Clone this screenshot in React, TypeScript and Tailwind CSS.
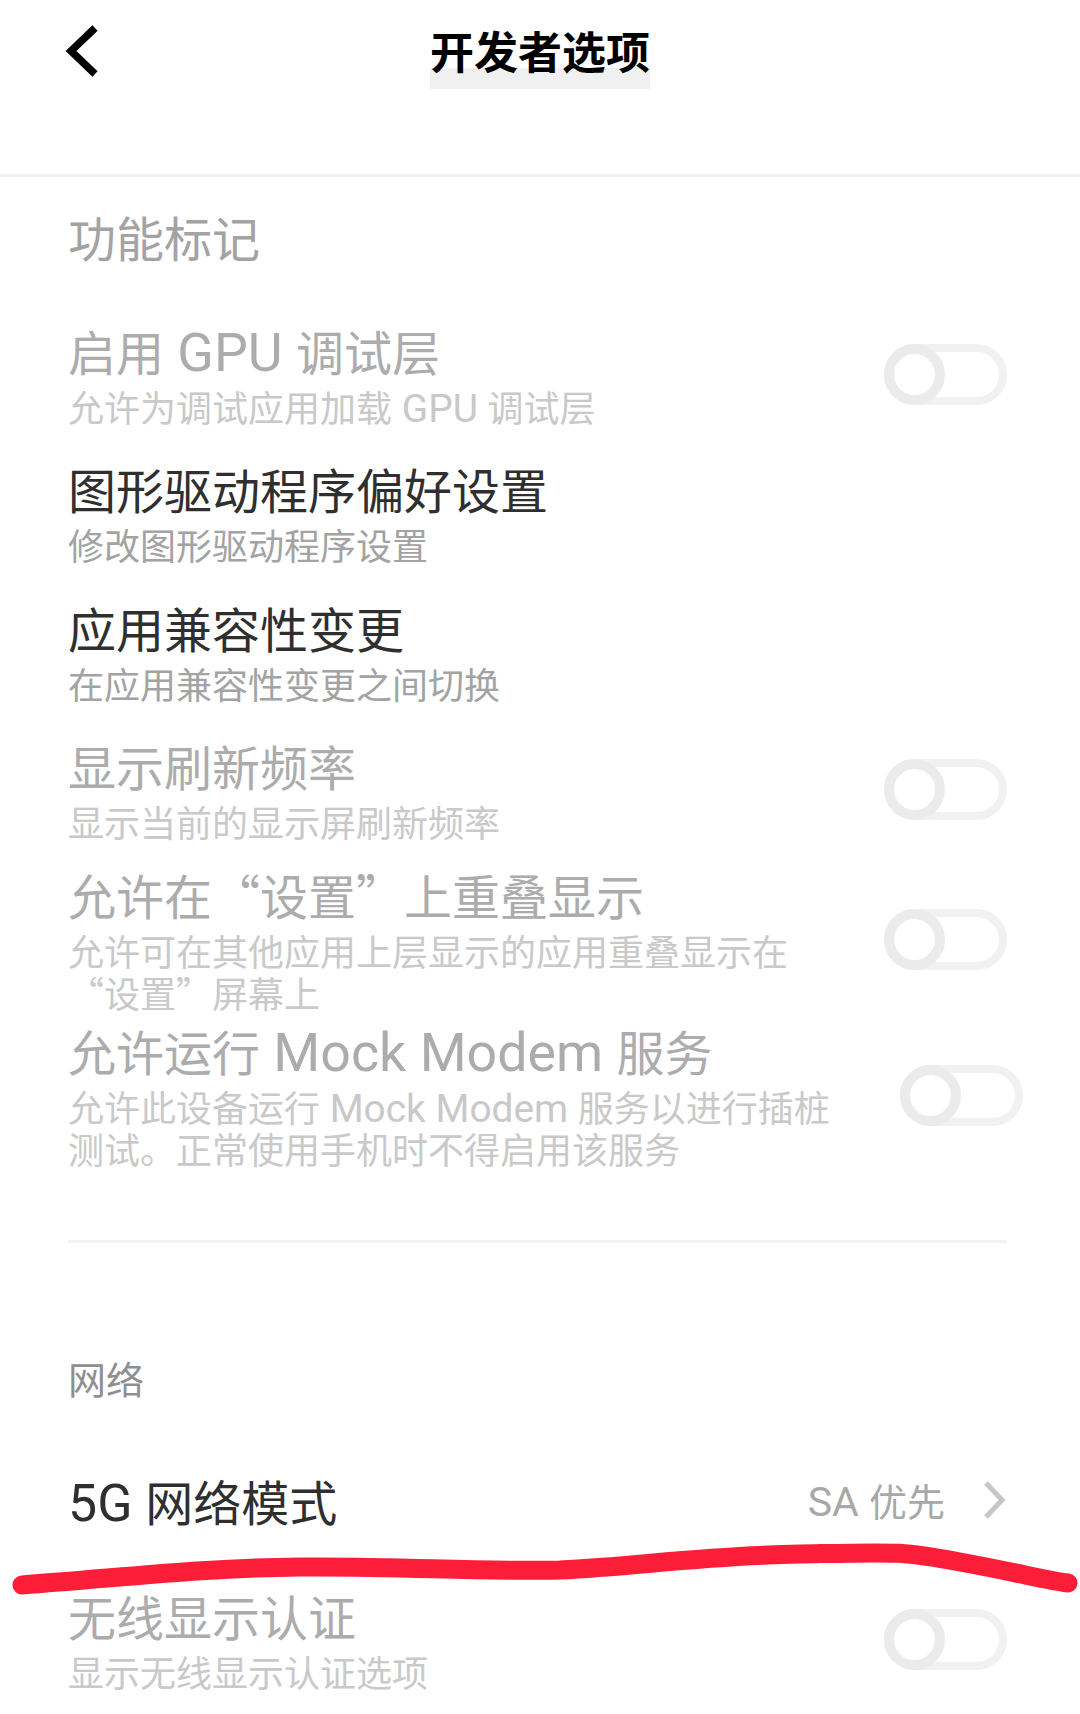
import React from 'react';

const Latin: React.FC<{ children: React.ReactNode; big?: boolean }> = ({ children, big }) => (
  <span className={`font-['Roboto',sans-serif] leading-[0] ${big ? 'text-[1.12em]' : 'text-[1.08em]'}`}>
    {children}
  </span>
);

const Toggle: React.FC<{ shift?: boolean }> = ({ shift }) => (
  <svg
    width="123"
    height="61"
    viewBox="0 0 123 61"
    className={`shrink-0 ${shift ? 'translate-x-[16px]' : ''}`}
  >
    <rect x="4" y="4" width="115" height="53" rx="26.5" fill="#ffffff" stroke="#f1f1f1" strokeWidth="8" />
    <circle cx="30.5" cy="30.5" r="25.5" fill="#ffffff" stroke="#ebebeb" strokeWidth="10" />
  </svg>
);

type RowProps = {
  title: React.ReactNode;
  subtitle: React.ReactNode;
  disabled?: boolean;
  toggle?: boolean;
  shift?: boolean;
  className?: string;
};

const Row: React.FC<RowProps> = ({ title, subtitle, disabled, toggle, shift, className }) => (
  <div className={`flex items-center justify-between ${className ?? ''}`}>
    <div className="w-[780px]">
      <div className={`h-[56px] text-[48px] leading-[56px] ${disabled ? 'text-[#acacac]' : 'text-[#2f2f2f]'}`}>
        {title}
      </div>
      <div className={`mt-[7px] text-[36px] leading-[42px] ${disabled ? 'text-[#c9c9c9]' : 'text-[#a3a3a3]'}`}>
        {subtitle}
      </div>
    </div>
    {toggle && <Toggle shift={shift} />}
  </div>
);

export default function App() {
  return (
    <div className="relative w-[1080px] min-h-[1714px] overflow-hidden bg-white font-['Noto_Sans_CJK_SC',sans-serif]">
      {/* 顶部栏 */}
      <header className="grid h-[174px] grid-cols-[1fr_auto_1fr] items-start pt-[23px]">
        <svg width="40" height="56" viewBox="0 0 40 56" className="ml-[62px]">
          <polyline points="33,5 9,28 33,51" fill="none" stroke="#000000" strokeWidth="7.5" strokeLinejoin="miter" />
        </svg>
        <h1 className="relative mt-[1px] text-[44px] font-bold leading-[52px] text-black">
          <span className="absolute left-0 right-0 top-[44px] h-[21px] bg-[#f0f0f0]" />
          <span className="relative">开发者选项</span>
        </h1>
        <div />
      </header>
      <div className="h-[3px] bg-[#f2f2f2]" />

      <main className="pl-[68px] pr-[73px]">
        <div className="mt-[31px] text-[48px] leading-[56px] text-[#a3a3a3]">功能标记</div>

        <Row
          className="mt-[58px]"
          disabled
          toggle
          title={<>启用<Latin big> GPU </Latin>调试层</>}
          subtitle={<>允许为调试应用加载<Latin> GPU </Latin>调试层</>}
        />
        <Row className="mt-[33px]" title="图形驱动程序偏好设置" subtitle="修改图形驱动程序设置" />
        <Row className="mt-[34px]" title="应用兼容性变更" subtitle="在应用兼容性变更之间切换" />
        <Row className="mt-[33px]" disabled toggle title="显示刷新频率" subtitle="显示当前的显示屏刷新频率" />
        <Row
          className="mt-[24px]"
          disabled
          toggle
          title="允许在“设置”上重叠显示"
          subtitle={<>允许可在其他应用上层显示的应用重叠显示在<br />“设置”屏幕上</>}
        />
        <Row
          className="mt-[9px]"
          disabled
          toggle
          shift
          title={<>允许运行<Latin big> Mock Modem </Latin>服务</>}
          subtitle={<>允许此设备运行<Latin> Mock Modem </Latin>服务以进行插桩<br />测试。正常使用手机时不得启用该服务</>}
        />

        <div className="mt-[71px] h-[3px] bg-[#f2f2f2]" />

        <div className="mt-[113px] text-[38px] leading-[44px] text-[#8f8f8f]">网络</div>

        <div className="mt-[72px] flex h-[56px] items-center justify-between">
          <div className="text-[48px] leading-[56px] text-[#2f2f2f]">
            <Latin>5G </Latin>网络模式
          </div>
          <div className="flex items-center">
            <span className="text-[38px] leading-[44px] text-[#a8a8a8]">
              <Latin>SA </Latin>优先
            </span>
            <svg width="26" height="40" viewBox="0 0 26 40" className="ml-[36px]">
              <polyline points="5,3 21,20 5,37" fill="none" stroke="#c6c6c6" strokeWidth="5" />
            </svg>
          </div>
        </div>

        <Row className="mt-[59px]" disabled toggle title="无线显示认证" subtitle="显示无线显示认证选项" />
      </main>

      {/* 红色标注线 */}
      <svg
        className="pointer-events-none absolute left-0 top-0"
        width="1080"
        height="1714"
        viewBox="0 0 1080 1714"
      >
        <path
          d="M22 1585 C 130 1577, 200 1568, 300 1567 S 480 1572, 560 1570 C 640 1566, 700 1556, 800 1554 S 900 1551, 960 1562 S 1045 1580, 1068 1583"
          fill="none"
          stroke="#fc1e39"
          strokeWidth="19"
          strokeLinecap="round"
        />
      </svg>
    </div>
  );
}
